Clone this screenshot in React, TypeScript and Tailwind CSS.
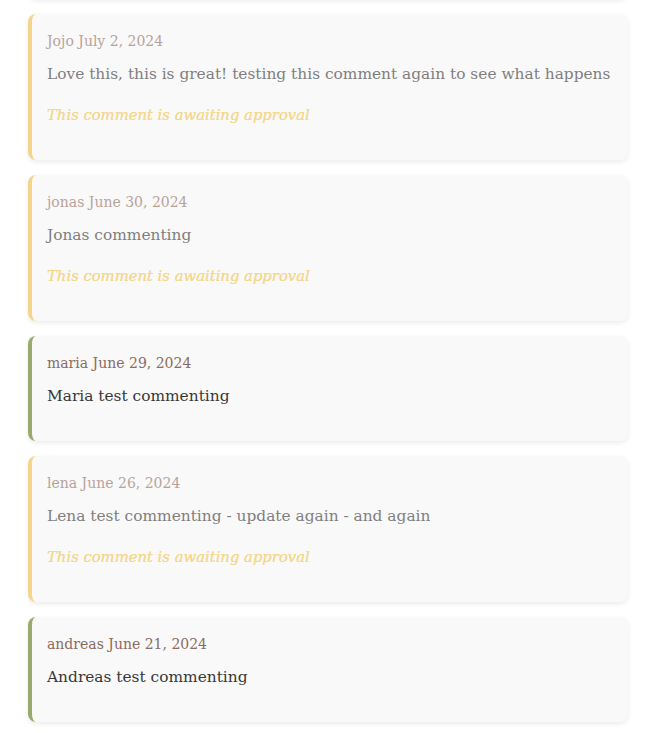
import React from 'react';

interface Comment {
  author: string;
  date: string;
  text: string;
  approved: boolean;
}

const comments: Comment[] = [
  { author: 'Jojo', date: 'July 2, 2024', text: 'Love this, this is great! testing this comment again to see what happens', approved: false },
  { author: 'jonas', date: 'June 30, 2024', text: 'Jonas commenting', approved: false },
  { author: 'maria', date: 'June 29, 2024', text: 'Maria test commenting', approved: true },
  { author: 'lena', date: 'June 26, 2024', text: 'Lena test commenting - update again - and again', approved: false },
  { author: 'andreas', date: 'June 21, 2024', text: 'Andreas test commenting', approved: true },
];

const CommentCard = ({ c }: { c: Comment }) => (
  <div
    className={
      c.approved
        ? 'rounded-lg bg-[#f9f9f9] border-l-4 border-[#98ab6c] pl-[15px] pr-[6px] pt-[15px] pb-[32px] shadow-[0_2px_5px_rgba(0,0,0,0.08)]'
        : 'rounded-lg bg-[#f9f9f9] border-l-4 border-[#f3d68b] pl-[15px] pr-[6px] pt-[15px] pb-[32px] shadow-[0_2px_5px_rgba(0,0,0,0.08)]'
    }
  >
    <div className={c.approved ? 'text-[14px] leading-[24px] text-[#8a6c60]' : 'text-[14px] leading-[24px] text-[#b8a39b]'}>
      {c.author} {c.date}
    </div>
    <p className={c.approved ? 'mt-2 text-[15.4px] leading-[26px] text-[#383838]' : 'mt-2 text-[15.4px] leading-[26px] text-[#7f7f7f]'}>
      {c.text}
    </p>
    {!c.approved && (
      <p className="mt-[15px] text-[14.8px] leading-[26px] italic text-[#f5d88d] [text-shadow:0_0_0.5px_#f5d88d]">
        This comment is awaiting approval
      </p>
    )}
  </div>
);

export default function App() {
  return (
    <div className="min-h-screen bg-white overflow-hidden [font-family:'DejaVu_Serif',serif]">
      <div className="flex flex-col gap-[15px] w-[600px] ml-[28px]">
        <div className="h-[40px] -mt-[41px] rounded-lg bg-[#f9f9f9] shadow-[0_2px_5px_rgba(0,0,0,0.08)]" />
        {comments.map(c => (
          <CommentCard key={c.author} c={c} />
        ))}
      </div>
    </div>
  );
}
